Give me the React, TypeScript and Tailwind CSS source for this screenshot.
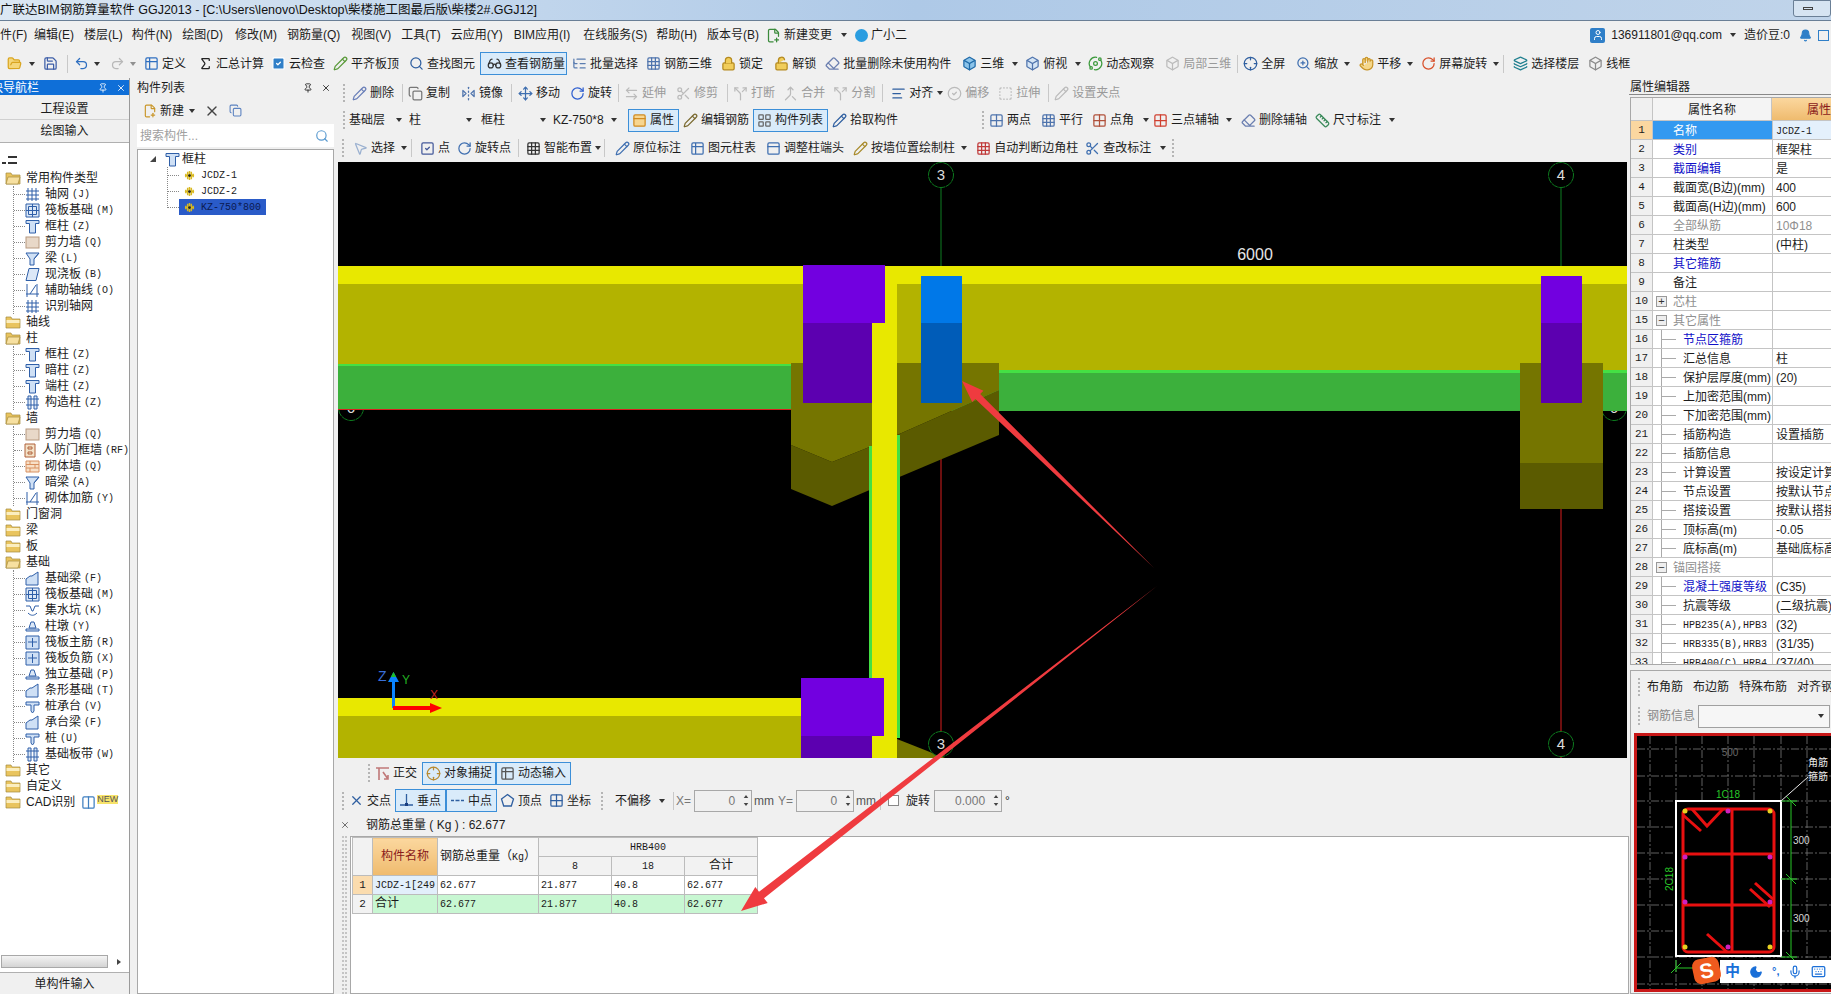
import type { ReactNode } from "react";
import {
  ArrowLeftRight, AlignLeft, Bell, Box, CircleCheck, Columns2, Copy, Crosshair, Eraser, FilePlus2, FlipHorizontal2, FolderOpen, Glasses,
  Grid2x2, Grid3x3, Hand, Keyboard, Layers, LayoutGrid, ListTree, Lock, LockOpen, Merge, Mic, Moon, Move, MousePointer2, Orbit, PanelTop,
  Pencil, Pin, Redo2, RotateCw, Ruler, Save, Scissors, Search, Sigma, Split, SquareCheck, SquareDashed, Table2, Undo2, User, X, ZoomIn,
} from "lucide-react";

const Caret = ({ c = "" }: { c?: string }) => (
  <svg viewBox="0 0 6 4" className={`w-[6px] h-[4px] shrink-0 ${c}`}>
    <path d="M0 0h6L3 4z" fill="#333" />
  </svg>
);
const Dots = ({ c = "" }: { c?: string }) => <div className={`h-[18px] border-l-2 border-dotted border-[#b5b5b5] shrink-0 ${c}`} />;
const Sep = ({ c = "" }: { c?: string }) => <div className={`h-[18px] w-px bg-[#c8c8c8] shrink-0 ${c}`} />;

const Tool = ({ i, t, c = "", gray }: { i: ReactNode; t: string; c?: string; gray?: boolean }) => (
  <div className={`flex items-center shrink-0 ${c}`}>
    <span className="w-[18px] flex items-center">{i}</span>
    <span className={`whitespace-nowrap ${gray ? "text-[#9a9a9a]" : "text-[#1c1c1c]"}`}>{t}</span>
  </div>
);

const Active = ({ children, c = "" }: { children: ReactNode; c?: string }) => (
  <div className={`flex items-center shrink-0 h-[23px] border border-[#3c8fd8] bg-[#d9ebfa] ${c}`}>{children}</div>
);

const I = "w-[15px] h-[15px]";

const Menu = () => (
  <div className="h-[27px] pt-[1px] flex items-center text-[12px] text-[#1c1c1c] shrink-0 overflow-hidden">
    <span className="w-[27px] overflow-hidden whitespace-nowrap">
      <span className="ml-[-12px] inline-block">文件(F)</span>
    </span>
    <span className="ml-[7px]">编辑(E)</span>
    <span className="ml-[10px]">楼层(L)</span>
    <span className="ml-[9px]">构件(N)</span>
    <span className="ml-[10px]">绘图(D)</span>
    <span className="ml-[12px]">修改(M)</span>
    <span className="ml-[10px]">钢筋量(Q)</span>
    <span className="ml-[11px]">视图(V)</span>
    <span className="ml-[10px]">工具(T)</span>
    <span className="ml-[10px]">云应用(Y)</span>
    <span className="ml-[11px]">BIM应用(I)</span>
    <span className="ml-[13px]">在线服务(S)</span>
    <span className="ml-[9px]">帮助(H)</span>
    <span className="ml-[10px]">版本号(B)</span>
    <FilePlus2 className="w-[15px] h-[15px] ml-[7px] text-[#3b8a3b]" />
    <span className="ml-[3px]">新建变更</span>
    <Caret c="ml-[9px]" />
    <span className="ml-[8px] w-[13px] h-[13px] rounded-full bg-[#2a9de0]" />
    <span className="ml-[3px]">广小二</span>
    <div className="ml-auto flex items-center">
      <span className="w-[15px] h-[15px] rounded-[2px] bg-[#2f7fc8] flex items-center justify-center">
        <User className="w-[12px] h-[12px] text-white" />
      </span>
      <span className="ml-[6px]">136911801@qq.com</span>
      <Caret c="ml-[8px]" />
      <span className="ml-[8px]">造价豆:0</span>
      <Bell className="w-[13px] h-[13px] ml-[9px] text-[#2f7fc8] fill-[#2f7fc8]" />
      <span className="ml-[6px] w-[11px] h-[11px] border border-[#2f7fc8]" />
      <span className="w-[2px]" />
    </div>
  </div>
);

const MainBar = () => (
  <div className="h-[30px] pt-[1px] flex items-center text-[12px] shrink-0 pl-[7px] overflow-hidden">
    <FolderOpen className={`${I} text-[#d9a520] fill-[#f5d77a]`} />
    <Caret c="ml-[7px]" />
    <Save className={`${I} ml-[8px] text-[#3d5ea8]`} />
    <Sep c="ml-[9px]" />
    <Undo2 className={`${I} ml-[6px] text-[#2f6fc0]`} />
    <Caret c="ml-[5px]" />
    <Redo2 className={`${I} ml-[10px] text-[#b8b8b8]`} />
    <Caret c="ml-[5px] opacity-50" />
    <Tool c="ml-[8px]" i={<Table2 className={`${I} text-[#2f6fc0]`} />} t="定义" />
    <Tool c="ml-[12px]" i={<Sigma className={`${I} text-[#222]`} />} t="汇总计算" />
    <Tool c="ml-[7px]" i={<SquareCheck className={`${I} text-white fill-[#2f7fc8]`} />} t="云检查" />
    <Tool c="ml-[8px]" i={<Pencil className={`${I} text-[#5a9a3a]`} />} t="平齐板顶" />
    <Tool c="ml-[10px]" i={<Search className={`${I} text-[#2f5fa0]`} />} t="查找图元" />
    <Active c="ml-[5px] w-[87px] pl-[6px]">
      <Tool i={<Glasses className={`${I} text-[#333]`} />} t="查看钢筋量" />
    </Active>
    <Tool c="ml-[5px]" i={<ListTree className={`${I} text-[#5b7db0]`} />} t="批量选择" />
    <Tool c="ml-[8px]" i={<Grid3x3 className={`${I} text-[#4f74ad]`} />} t="钢筋三维" />
    <Tool c="ml-[9px]" i={<Lock className={`${I} text-[#b58a1e] fill-[#f1cd5a]`} />} t="锁定" />
    <Tool c="ml-[11px]" i={<LockOpen className={`${I} text-[#b58a1e] fill-[#f1cd5a]`} />} t="解锁" />
    <Tool c="ml-[9px]" i={<Eraser className={`${I} text-[#6b7fb0]`} />} t="批量删除未使用构件" />
    <Tool c="ml-[11px]" i={<Box className={`${I} text-[#1f6aa8] fill-[#8cc4ea]`} />} t="三维" />
    <Caret c="ml-[8px]" />
    <Tool c="ml-[7px]" i={<Box className={`${I} text-[#4f74ad] fill-[#d5e5f5]`} />} t="俯视" />
    <Caret c="ml-[8px]" />
    <Tool c="ml-[7px]" i={<Orbit className={`${I} text-[#3c9a3c]`} />} t="动态观察" />
    <Tool c="ml-[11px]" gray i={<Box className={`${I} text-[#bbb]`} />} t="局部三维" />
    <Sep c="ml-[6px]" />
    <Tool c="ml-[5px]" i={<Crosshair className={`${I} text-[#2f5fa0]`} />} t="全屏" />
    <Tool c="ml-[11px]" i={<ZoomIn className={`${I} text-[#3f6fb0]`} />} t="缩放" />
    <Caret c="ml-[6px]" />
    <Tool c="ml-[9px]" i={<Hand className={`${I} text-[#c9962a] fill-[#f5d78a]`} />} t="平移" />
    <Caret c="ml-[6px]" />
    <Tool c="ml-[8px]" i={<RotateCw className={`${I} text-[#d8502a]`} />} t="屏幕旋转" />
    <Caret c="ml-[6px]" />
    <Sep c="ml-[4px]" />
    <Tool c="ml-[9px]" i={<Layers className={`${I} text-[#1f7f8f]`} />} t="选择楼层" />
    <Tool c="ml-[9px]" i={<Box className={`${I} text-[#8a8a8a]`} />} t="线框" />
  </div>
);

const Bar2 = () => (
  <div className="h-[26px] flex items-center text-[12px] pl-[8px] overflow-hidden">
    <Dots />
    <Tool c="ml-[7px]" i={<Pencil className={`${I} text-[#6a7fb8]`} />} t="删除" />
    <Sep c="ml-[8px]" />
    <Tool c="ml-[5px]" i={<Copy className={`${I} text-[#777]`} />} t="复制" />
    <Tool c="ml-[11px]" i={<FlipHorizontal2 className={`${I} text-[#4f74ad]`} />} t="镜像" />
    <Sep c="ml-[8px]" />
    <Tool c="ml-[6px]" i={<Move className={`${I} text-[#3f6fb0]`} />} t="移动" />
    <Tool c="ml-[10px]" i={<RotateCw className={`${I} text-[#2f5fd0]`} />} t="旋转" />
    <Sep c="ml-[6px]" />
    <Tool c="ml-[5px]" gray i={<ArrowLeftRight className={`${I} text-[#bbb]`} />} t="延伸" />
    <Tool c="ml-[10px]" gray i={<Scissors className={`${I} text-[#bbb]`} />} t="修剪" />
    <Sep c="ml-[9px]" />
    <Tool c="ml-[5px]" gray i={<Split className={`${I} text-[#bbb]`} />} t="打断" />
    <Tool c="ml-[8px]" gray i={<Merge className={`${I} text-[#bbb]`} />} t="合并" />
    <Tool c="ml-[8px]" gray i={<Split className={`${I} text-[#bbb]`} />} t="分割" />
    <Sep c="ml-[7px]" />
    <Tool c="ml-[8px]" i={<AlignLeft className={`${I} text-[#2f5fa0]`} />} t="对齐" />
    <Caret c="ml-[4px]" />
    <Tool c="ml-[4px]" gray i={<CircleCheck className={`${I} text-[#bbb]`} />} t="偏移" />
    <Tool c="ml-[9px]" gray i={<SquareDashed className={`${I} text-[#bbb]`} />} t="拉伸" />
    <Sep c="ml-[8px]" />
    <Tool c="ml-[5px]" gray i={<Pencil className={`${I} text-[#bbb]`} />} t="设置夹点" />
  </div>
);

const Combo = ({ t, w }: { t: string; w: string }) => (
  <div className={`flex items-center justify-between shrink-0 ${w}`}>
    <span className="whitespace-nowrap overflow-hidden">{t}</span>
    <Caret />
  </div>
);

const Bar3 = () => (
  <div className="h-[28px] flex items-center text-[12px] pl-[8px] text-[#1c1c1c] overflow-hidden">
    <Dots />
    <Combo t="基础层" w="ml-[4px] w-[53px]" />
    <Combo t="柱" w="ml-[7px] w-[63px]" />
    <Combo t="框柱" w="ml-[9px] w-[65px]" />
    <Combo t="KZ-750*8" w="ml-[7px] w-[64px]" />
    <Active c="ml-[11px] w-[51px] pl-[3px]">
      <Tool i={<PanelTop className={`${I} text-[#d08a20] fill-[#f7d690]`} />} t="属性" />
    </Active>
    <Tool c="ml-[4px]" i={<Pencil className={`${I} text-[#7a6a30]`} />} t="编辑钢筋" />
    <Active c="ml-[4px] w-[75px] pl-[3px]">
      <Tool i={<LayoutGrid className={`${I} text-[#666]`} />} t="构件列表" />
    </Active>
    <Tool c="ml-[4px]" i={<Pencil className={`${I} text-[#2f5fa0]`} />} t="拾取构件" />
    <Dots c="ml-[84px]" />
    <Tool c="ml-[5px]" i={<Grid2x2 className={`${I} text-[#4f74ad]`} />} t="两点" />
    <Tool c="ml-[10px]" i={<Grid3x3 className={`${I} text-[#4f74ad]`} />} t="平行" />
    <Tool c="ml-[9px]" i={<Grid2x2 className={`${I} text-[#b0503a]`} />} t="点角" />
    <Caret c="ml-[9px]" />
    <Tool c="ml-[4px]" i={<Grid2x2 className={`${I} text-[#d04030]`} />} t="三点辅轴" />
    <Caret c="ml-[7px]" />
    <Tool c="ml-[9px]" i={<Eraser className={`${I} text-[#6b7fb0]`} />} t="删除辅轴" />
    <Tool c="ml-[8px]" i={<Ruler className={`${I} text-[#3a8a5a]`} />} t="尺寸标注" />
    <Caret c="ml-[8px]" />
  </div>
);

const Bar4 = () => (
  <div className="h-[28px] flex items-center text-[12px] pl-[7px] overflow-hidden">
    <Dots />
    <Tool c="ml-[9px]" i={<MousePointer2 className={`${I} text-[#9ab0d0]`} />} t="选择" />
    <Caret c="ml-[6px]" />
    <Sep c="ml-[4px]" />
    <Tool c="ml-[8px]" i={<SquareCheck className={`${I} text-[#44599a]`} />} t="点" />
    <Tool c="ml-[7px]" i={<RotateCw className={`${I} text-[#3f6fb0]`} />} t="旋转点" />
    <Sep c="ml-[7px]" />
    <Tool c="ml-[7px]" i={<Grid3x3 className={`${I} text-[#333]`} />} t="智能布置" />
    <Caret c="ml-[3px]" />
    <Sep c="ml-[3px]" />
    <Tool c="ml-[10px]" i={<Pencil className={`${I} text-[#3f6fb0]`} />} t="原位标注" />
    <Tool c="ml-[9px]" i={<Table2 className={`${I} text-[#3f6fb0]`} />} t="图元柱表" />
    <Tool c="ml-[10px]" i={<PanelTop className={`${I} text-[#3f6fb0]`} />} t="调整柱端头" />
    <Tool c="ml-[9px]" i={<Pencil className={`${I} text-[#a88a2a]`} />} t="按墙位置绘制柱" />
    <Caret c="ml-[6px]" />
    <Tool c="ml-[9px]" i={<Grid3x3 className={`${I} text-[#c03a3a]`} />} t="自动判断边角柱" />
    <Tool c="ml-[7px]" i={<Scissors className={`${I} text-[#3f6fb0]`} />} t="查改标注" />
    <Caret c="ml-[9px]" />
    <Dots c="ml-[6px]" />
  </div>
);

const Badge = ({ x, y, n }: { x: number; y: number; n: string }) => (
  <g>
    <circle cx={x} cy={y} r="12.5" fill="#000" stroke="#0d7a1e" strokeDasharray="7 0.6" />
    <text x={x} y={y + 5} textAnchor="middle" fontSize="15" fill="#dcdcdc" fontFamily="Liberation Sans">
      {n}
    </text>
  </g>
);

const Canvas = () => (
  <svg viewBox="338 162 1289 596" className="w-[1289px] h-[596px] bg-black block ml-[3px]">
    <line x1="941" y1="186" x2="941" y2="266" stroke="#0f7f22" />
    <line x1="1561" y1="186" x2="1561" y2="266" stroke="#0f7f22" />
    <line x1="941" y1="435" x2="941" y2="732" stroke="#d81e1e" />
    <line x1="1561" y1="509" x2="1561" y2="758" stroke="#d81e1e" />
    <Badge x={351} y={408} n="6" />
    <Badge x={1614} y={408} n="6" />
    <line x1="338" y1="409.5" x2="791" y2="409.5" stroke="#d81e1e" />

    <rect x="338" y="266" width="1289" height="18" fill="#e8e800" />
    <rect x="338" y="284" width="534" height="80" fill="#b3b300" />
    <rect x="897" y="284" width="730" height="86" fill="#b3b300" />
    <rect x="338" y="364" width="534" height="45" fill="#3cb03c" />
    <rect x="338" y="364" width="534" height="2" fill="#44e044" />
    <rect x="897" y="370" width="730" height="41" fill="#3cb03c" />
    <rect x="897" y="370" width="730" height="3" fill="#44e044" />

    <polygon points="791,445 832,462 872,446 872,489 832,506 791,489" fill="#5b5b00" />
    <polygon points="791,363 872,363 872,446 832,462 791,445" fill="#757500" />
    <polygon points="897,435 999,390 999,435 897,478" fill="#5b5b00" />
    <polygon points="897,363 999,363 999,390 897,435" fill="#757500" />

    <rect x="869" y="446" width="3" height="232" fill="#44e044" />
    <rect x="897" y="435" width="3" height="303" fill="#44e044" />
    <rect x="872" y="284" width="25" height="474" fill="#e8e800" />
    <rect x="885" y="266" width="12" height="18" fill="#e8e800" />

    <rect x="803" y="265" width="82" height="58" fill="#7200e0" />
    <rect x="803" y="323" width="69" height="80" fill="#5c00b0" />
    <rect x="921" y="276" width="41" height="47" fill="#0078e8" />
    <rect x="921" y="323" width="41" height="80" fill="#005cb8" />

    <rect x="1520" y="363" width="83" height="100" fill="#757500" />
    <rect x="1520" y="463" width="83" height="46" fill="#5b5b00" />
    <rect x="1541" y="276" width="41" height="47" fill="#7200e0" />
    <rect x="1541" y="323" width="41" height="80" fill="#5c00b0" />

    <rect x="338" y="698" width="463" height="18" fill="#e8e800" />
    <rect x="338" y="716" width="463" height="42" fill="#b3b300" />
    <polygon points="897,739 945,758 897,758" fill="#757500" />
    <rect x="801" y="678" width="83" height="58" fill="#7200e0" />
    <rect x="801" y="736" width="71" height="22" fill="#5c00b0" />

    <Badge x={941} y={175} n="3" />
    <Badge x={1561} y={175} n="4" />
    <Badge x={941} y={744} n="3" />
    <Badge x={1561} y={744} n="4" />
    <text x="1255" y="260" textAnchor="middle" fontSize="16" fill="#e6e6e6" fontFamily="Liberation Sans">
      6000
    </text>

    <rect x="392" y="680" width="3" height="28" fill="#0a84ff" />
    <polygon points="393.5,672 388,682 399,682" fill="#0a84ff" />
    <polygon points="393.5,672 391,677 396,677" fill="#20c020" />
    <rect x="393" y="706" width="40" height="4" fill="#ff0000" />
    <polygon points="442,708 430,703 430,713" fill="#ff0000" />
    <text x="378" y="681" fontSize="14" fill="#3a6fd8" fontFamily="Liberation Sans">Z</text>
    <text x="402" y="684" fontSize="12" fill="#22b022" fontFamily="Liberation Sans">Y</text>
    <text x="430" y="699" fontSize="12" fill="#c02020" fontFamily="Liberation Sans">X</text>
  </svg>
);

const Snap = ({ i, t, w }: { i: ReactNode; t: string; w: string }) => (
  <Active c={`${w} pl-[3px]`}>
    <Tool i={i} t={t} />
  </Active>
);

const Spin = ({ v, w }: { v: string; w: string }) => (
  <div className={`h-[22px] bg-[#f0f0f0] border border-[#a8a8a8] flex items-center justify-end shrink-0 ${w}`}>
    <span className="text-[#777] mr-[6px] font-['Liberation_Sans',sans-serif]">{v}</span>
    <span className="w-[10px] flex flex-col items-center gap-[5px]">
      <svg viewBox="0 0 6 4" className="w-[6px] h-[3px]"><path d="M0 4h6L3 0z" fill="#444" /></svg>
      <svg viewBox="0 0 6 4" className="w-[6px] h-[3px]"><path d="M0 0h6L3 4z" fill="#444" /></svg>
    </span>
  </div>
);

const SnapIcon = ({ d, dot }: { d: string; dot?: boolean }) => (
  <svg viewBox="0 0 15 15" className={I}>
    <path d={d} fill="none" stroke="#2f5fa0" strokeWidth="1.3" />
    {dot && <rect x="6" y="10" width="3" height="3" fill="#1c3f80" />}
  </svg>
);

const Bottom = () => (
  <div className="flex-1 flex flex-col min-h-0 text-[12px] text-[#1c1c1c]">
    <div className="h-[30px] flex items-center pl-[33px]">
      <Dots />
      <Tool
        c="ml-[5px]"
        i={
          <svg viewBox="0 0 15 15" className={I}>
            <path d="M1 2h13M4 2v12M8 6l5 7M13 9v4H9" fill="none" stroke="#c07878" strokeWidth="1.6" />
          </svg>
        }
        t="正交"
      />
      <Snap w="ml-[5px] w-[74px]" i={<Crosshair className={`${I} text-[#b88a30]`} />} t="对象捕捉" />
      <Snap w="w-[75px]" i={<Table2 className={`${I} text-[#555]`} />} t="动态输入" />
    </div>
    <div className="h-[25px] flex items-center pl-[7px]">
      <Dots />
      <Tool c="ml-[5px]" i={<X className={`${I} text-[#2f5fa0]`} />} t="交点" />
      <Snap w="ml-[4px] w-[51px]" i={<SnapIcon d="M7.5 1v11M1 12h13" dot />} t="垂点" />
      <Snap w="w-[51px]" i={<SnapIcon d="M1 7.5h3M11 7.5h3M5.5 7.5h4" />} t="中点" />
      <Tool c="ml-[3px]" i={<SnapIcon d="M7.5 1.5l6 4.5-2.2 7H3.7L1.5 6z" />} t="顶点" />
      <Tool c="ml-[7px]" i={<Grid2x2 className={`${I} text-[#2f5fa0]`} />} t="坐标" />
      <Dots c="ml-[10px]" />
      <span className="ml-[12px]">不偏移</span>
      <Caret c="ml-[8px]" />
      <Sep c="ml-[8px]" />
      <span className="ml-[2px] text-[#777]">X=</span>
      <Spin v="0" w="ml-[3px] w-[58px]" />
      <span className="ml-[2px] text-[#555]">mm</span>
      <span className="ml-[4px] text-[#777]">Y=</span>
      <Spin v="0" w="ml-[3px] w-[58px]" />
      <span className="ml-[2px] text-[#555]">mm</span>
      <Sep c="ml-[4px]" />
      <span className="ml-[7px] w-[11px] h-[11px] bg-white border border-[#888]" />
      <span className="ml-[7px]">旋转</span>
      <Spin v="0.000" w="ml-[4px] w-[68px]" />
      <span className="ml-[3px]">°</span>
    </div>
    <div className="h-[23px] flex items-center pl-[5px]">
      <X className="w-[10px] h-[10px] text-[#555]" />
      <span className="ml-[16px]">钢筋总重量 ( Kg ) : 62.677</span>
    </div>
    <div className="flex-1 min-h-0 flex">
      <div className="w-[15px] shrink-0 pl-[7px]">
        <div className="h-full w-[5px] border-x-2 border-dotted border-[#c4c4c4]" />
      </div>
      <div className="flex-1 bg-white border border-[#a8a8a8] pl-[1px]">
        <table className="border-collapse table-fixed w-[405px] font-['Liberation_Mono','Noto_Sans_CJK_SC',monospace] text-[10px] text-[#1a1a1a]">
          <colgroup>
            <col className="w-[20px]" />
            <col className="w-[65px]" />
            <col className="w-[101px]" />
            <col className="w-[73px]" />
            <col className="w-[73px]" />
            <col className="w-[73px]" />
          </colgroup>
          <thead>
            <tr className="h-[19px]">
              <th rowSpan={2} className="border border-[#bcbcbc] bg-[#f2f2f2]" />
              <th rowSpan={2} className="border border-[#bcbcbc] bg-gradient-to-b from-[#fbd79e] to-[#efbb6e] font-normal text-[12px] text-[#8a1a1a]">构件名称</th>
              <th rowSpan={2} className="border border-[#bcbcbc] bg-[#f6f6f6] font-normal text-[12px] text-left pl-[2px] whitespace-nowrap">钢筋总重量（<span className="text-[10px]">Kg</span>）</th>
              <th colSpan={3} className="border border-[#bcbcbc] bg-[#f2f2f2] font-normal">HRB400</th>
            </tr>
            <tr className="h-[19px]">
              <th className="border border-[#bcbcbc] bg-[#f2f2f2] font-normal">8</th>
              <th className="border border-[#bcbcbc] bg-[#f2f2f2] font-normal">18</th>
              <th className="border border-[#bcbcbc] bg-[#f2f2f2] font-normal text-[12px]">合计</th>
            </tr>
          </thead>
          <tbody>
            <tr className="h-[19px]">
              <td className="border border-[#bcbcbc] bg-[#fbdcae] text-center text-[11px]">1</td>
              <td className="border border-[#bcbcbc] bg-[#e2effb] pl-[2px] whitespace-nowrap overflow-hidden">JCDZ-1[249</td>
              <td className="border border-[#bcbcbc] pl-[2px]">62.677</td>
              <td className="border border-[#bcbcbc] pl-[2px]">21.877</td>
              <td className="border border-[#bcbcbc] pl-[2px]">40.8</td>
              <td className="border border-[#bcbcbc] pl-[2px]">62.677</td>
            </tr>
            <tr className="h-[19px] bg-[#c8f7d2]">
              <td className="border border-[#bcbcbc] bg-[#f2f2f2] text-center text-[11px]">2</td>
              <td className="border border-[#bcbcbc] pl-[2px] text-[12px]">合计</td>
              <td className="border border-[#bcbcbc] pl-[2px]">62.677</td>
              <td className="border border-[#bcbcbc] pl-[2px]">21.877</td>
              <td className="border border-[#bcbcbc] pl-[2px]">40.8</td>
              <td className="border border-[#bcbcbc] pl-[2px]">62.677</td>
            </tr>
          </tbody>
        </table>
      </div>
    </div>
  </div>
);

const Folder = ({ open }: { open?: boolean }) => (
  <svg viewBox="0 0 16 14" className="w-[16px] h-[14px] shrink-0">
    <path d="M1 2h5l1 2h8v9H1z" fill="#e9c45e" stroke="#a58a3c" strokeWidth="0.7" />
    {open ? <path d="M3 6h12l-2 7H1z" fill="#f7e0a0" stroke="#a58a3c" strokeWidth="0.7" /> : <path d="M1.5 5h13v3h-13z" fill="#fbeec0" />}
  </svg>
);

type Kind = "grid" | "raft" | "col" | "wall" | "beam" | "slab" | "aux" | "door" | "brick" | "found" | "pit" | "pier" | "bar" | "pile" | "gear";

const NodeIcon = ({ k }: { k: Kind }) => {
  const s = "#2f5fa8";
  return (
    <svg viewBox="0 0 15 15" className="w-[15px] h-[15px] shrink-0">
      {k === "grid" && <path d="M3 1v13M7 1v13M11 1v13M1 4h13M1 8h13M1 12h13" stroke={s} fill="none" />}
      {k === "raft" && <path d="M1 1h13v13H1zM3.5 3.5h8v8h-8zM7.5 1v13M1 7.5h13" stroke={s} fill="#dce8f7" />}
      {k === "col" && <path d="M1 1.5h13v3h-3.5v9.5h-6V4.5H1z" stroke={s} fill="#cfe0f5" />}
      {k === "wall" && <rect x="1" y="2" width="13" height="11" fill="#e8d8c8" stroke="#b89a80" />}
      {k === "beam" && <path d="M1 2h13l-5 6v6H5V8zM9 8l5-6" stroke={s} fill="#cfe0f5" />}
      {k === "slab" && <path d="M4 1.5h10L11 13.5H1z" stroke={s} fill="#dce8f7" />}
      {k === "aux" && <path d="M2 1v13M12 1v13M1 11h13M5 11l6-9" stroke={s} fill="none" />}
      {k === "door" && <path d="M3 1h10v13H3zM6 4h4v2H6zM6 9h4v2H6z" stroke="#b0603a" fill="#f3e2c8" />}
      {k === "brick" && <path d="M1 2h13v11H1zM1 5.5h13M1 9h13M5 2v3.5M10 5.5V9M5 9v4" stroke="#d89060" fill="#f7e0c8" />}
      {k === "found" && <path d="M1 14V8l4-3 2 0 6-4v13z" stroke={s} fill="#cfe0f5" />}
      {k === "pit" && <path d="M1 3h4l2 5h1l2-5h4M3 10c3 3 6 3 9 0" stroke={s} fill="none" />}
      {k === "pier" && <path d="M6 3h3l2 6H4zM1 10h13v2H1z" stroke={s} fill="#dce8f7" />}
      {k === "bar" && <path d="M1 1h13v13H1zM7.5 3v9M3 7h9" stroke={s} fill="#cfe0f5" />}
      {k === "pile" && <path d="M1 3h13v3H9v6l-1.5 2L6 12V6H1z" stroke={s} fill="#cfe0f5" />}
      {k === "gear" && <path d="M3 1h3v13H3zM9 1h3v13H9zM1 4h13M1 10h13" stroke={s} fill="#dce8f7" />}
    </svg>
  );
};

const Child = ({ k, t, tag, c = "" }: { k: Kind; t: string; tag: string; c?: string }) => (
  <div className={`h-[16px] flex items-center ${c}`}>
    <span className="w-[11px] border-t border-dotted border-[#888]" />
    <NodeIcon k={k} />
    <span className="ml-[5px] whitespace-nowrap">{t}</span>
    <span className="ml-[3px] text-[10px] font-['Liberation_Mono',monospace] whitespace-nowrap">{tag}</span>
  </div>
);

const Group = ({ t, open, children }: { t: ReactNode; open?: boolean; children?: ReactNode }) => (
  <div>
    <div className="h-[16px] flex items-center pl-[5px]">
      <Folder open={open} />
      <span className="ml-[5px] whitespace-nowrap flex items-center">{t}</span>
    </div>
    {children && <div className="ml-[13px] border-l border-dotted border-[#888] mb-[8px] [&>*:last-child]:mb-[-8px]">{children}</div>}
  </div>
);

const PaneHead = ({ t, c = "" }: { t: ReactNode; c?: string }) => (
  <div className={`h-[15px] mt-[2px] flex items-center justify-between text-[12px] overflow-hidden ${c}`}>
    <span className="whitespace-nowrap">{t}</span>
    <span className="flex items-center gap-[8px] pr-[3px]">
      <Pin className="w-[10px] h-[10px]" />
      <X className="w-[10px] h-[10px]" />
    </span>
  </div>
);

const NavPanel = () => (
  <div className="w-[130px] shrink-0 flex flex-col text-[12px] text-[#1c1c1c] border-r border-[#9a9a9a]">
    <PaneHead c="bg-[#0f6fd8] text-white" t={<span className="ml-[-9px] block">块导航栏</span>} />
    <div className="h-[21px] mt-[4px] flex items-center justify-center border-b border-[#d0d0d0]">工程设置</div>
    <div className="h-[23px] flex items-center justify-center border-b border-[#b0b0b0]">绘图输入</div>
    <div className="flex-1 bg-white flex flex-col min-h-0">
      <div className="h-[27px] flex items-end pb-[6px] gap-[2px] pl-[2px]">
        <span className="w-[4px] h-[2px] bg-[#333]" />
        <span className="w-[9px] h-[8px] border-t-2 border-b-2 border-[#333]" />
      </div>
      <Group t="常用构件类型" open>
        <Child k="grid" t="轴网" tag="(J)" />
        <Child k="raft" t="筏板基础" tag="(M)" />
        <Child k="col" t="框柱" tag="(Z)" />
        <Child k="wall" t="剪力墙" tag="(Q)" />
        <Child k="beam" t="梁" tag="(L)" />
        <Child k="slab" t="现浇板" tag="(B)" />
        <Child k="aux" t="辅助轴线" tag="(O)" />
        <Child k="grid" t="识别轴网" tag="" />
      </Group>
      <Group t="轴线" />
      <Group t="柱" open>
        <Child k="col" t="框柱" tag="(Z)" />
        <Child k="col" t="暗柱" tag="(Z)" />
        <Child k="col" t="端柱" tag="(Z)" />
        <Child k="gear" t="构造柱" tag="(Z)" />
      </Group>
      <Group t="墙" open>
        <Child k="wall" t="剪力墙" tag="(Q)" />
        <Child k="door" t="人防门框墙" tag="(RF)" />
        <Child k="brick" t="砌体墙" tag="(Q)" />
        <Child k="beam" t="暗梁" tag="(A)" />
        <Child k="aux" t="砌体加筋" tag="(Y)" />
      </Group>
      <Group t="门窗洞" />
      <Group t="梁" />
      <Group t="板" />
      <Group t="基础" open>
        <Child k="found" t="基础梁" tag="(F)" />
        <Child k="raft" t="筏板基础" tag="(M)" />
        <Child k="pit" t="集水坑" tag="(K)" />
        <Child k="pier" t="柱墩" tag="(Y)" />
        <Child k="bar" t="筏板主筋" tag="(R)" />
        <Child k="bar" t="筏板负筋" tag="(X)" />
        <Child k="pier" t="独立基础" tag="(P)" />
        <Child k="found" t="条形基础" tag="(T)" />
        <Child k="pile" t="桩承台" tag="(V)" />
        <Child k="found" t="承台梁" tag="(F)" />
        <Child k="pile" t="桩" tag="(U)" />
        <Child k="gear" t="基础板带" tag="(W)" />
      </Group>
      <Group t="其它" />
      <Group t="自定义" />
      <Group
        t={
          <>
            CAD识别
            <Columns2 className="w-[15px] h-[15px] ml-[6px] text-[#3f7fc0]" />
            <span className="ml-[1px] mb-[5px] text-[9px] leading-[9px] bg-[#f7e36a] text-[#555] font-['Liberation_Sans',sans-serif]">NEW</span>
          </>
        }
      />
      <div className="flex-1" />
      <div className="h-[13px] mb-[4px] flex items-center pl-[1px]">
        <div className="w-[107px] h-[13px] border border-[#a8a8a8] bg-gradient-to-b from-[#f4f4f4] to-[#d4d4d4]" />
        <svg viewBox="0 0 4 6" className="w-[4px] h-[6px] ml-[9px]"><path d="M0 0l4 3-4 3z" fill="#444" /></svg>
      </div>
    </div>
    <div className="h-[22px] flex items-center justify-center border-t border-[#b0b0b0]">单构件输入</div>
  </div>
);

const ListPanel = () => (
  <div className="w-[197px] shrink-0 ml-[7px] flex flex-col text-[12px] text-[#1c1c1c]">
    <PaneHead t="构件列表" />
    <div className="h-[27px] mt-[2px] flex items-center pl-[6px]">
      <FilePlus2 className="w-[14px] h-[14px] text-[#c9962a]" />
      <span className="ml-[3px]">新建</span>
      <Caret c="ml-[5px]" />
      <X className="w-[16px] h-[16px] ml-[9px] text-[#444]" />
      <Copy className="w-[13px] h-[13px] ml-[9px] text-[#5b82c0]" />
    </div>
    <div className="h-[23px] flex items-center bg-white">
      <span className="pl-[3px] text-[#a0a0a0] flex-1">搜索构件...</span>
      <Search className="w-[14px] h-[14px] text-[#5b9bd0] mr-[5px]" />
    </div>
    <div className="flex-1 mt-[2px] bg-white border border-[#a8a8a8] pt-[1px]">
      <div className="h-[16px] flex items-center pl-[12px]">
        <svg viewBox="0 0 6 6" className="w-[6px] h-[6px]"><path d="M6 0v6H0z" fill="#444" /></svg>
        <span className="ml-[9px]"><NodeIcon k="col" /></span>
        <span className="ml-[2px]">框柱</span>
      </div>
      <div className="ml-[29px] border-l border-dotted border-[#888] h-[41px]">
        {["JCDZ-1", "JCDZ-2", "KZ-750*800"].map((t, n) => (
          <div key={t} className="h-[16px] flex items-center">
            <span className="w-[11px] border-t border-dotted border-[#888]" />
            <span className={`flex items-center h-[16px] pl-[5px] w-[87px] ${n === 2 ? "bg-[#2a5bc8] text-[#0a1a50]" : ""}`}>
              <svg viewBox="0 0 12 12" className="w-[11px] h-[11px] shrink-0">
                <path d="M2 4v4M4 2v8M6 1v10M8 2v8M10 4v4M1 6h10" stroke="#d8b820" strokeWidth="1.6" />
                <circle cx="6" cy="6" r="1.5" fill="#222" />
              </svg>
              <span className="ml-[6px] text-[10px] font-['Liberation_Mono',monospace]">{t}</span>
            </span>
          </div>
        ))}
      </div>
    </div>
  </div>
);

type Prop = { n: string; name: string; v?: string; tone?: "blue" | "gray" | "sel"; tree?: "plus" | "minus" | "leaf"; small?: boolean };

const props: Prop[] = [
  { n: "1", name: "名称", v: "JCDZ-1", tone: "sel" },
  { n: "2", name: "类别", v: "框架柱", tone: "blue" },
  { n: "3", name: "截面编辑", v: "是", tone: "blue" },
  { n: "4", name: "截面宽(B边)(mm)", v: "400" },
  { n: "5", name: "截面高(H边)(mm)", v: "600" },
  { n: "6", name: "全部纵筋", v: "10Φ18", tone: "gray" },
  { n: "7", name: "柱类型", v: "(中柱)" },
  { n: "8", name: "其它箍筋", tone: "blue" },
  { n: "9", name: "备注" },
  { n: "10", name: "芯柱", tone: "gray", tree: "plus" },
  { n: "15", name: "其它属性", tone: "gray", tree: "minus" },
  { n: "16", name: "节点区箍筋", tone: "blue", tree: "leaf" },
  { n: "17", name: "汇总信息", v: "柱", tree: "leaf" },
  { n: "18", name: "保护层厚度(mm)", v: "(20)", tree: "leaf" },
  { n: "19", name: "上加密范围(mm)", tree: "leaf" },
  { n: "20", name: "下加密范围(mm)", tree: "leaf" },
  { n: "21", name: "插筋构造", v: "设置插筋", tree: "leaf" },
  { n: "22", name: "插筋信息", tree: "leaf" },
  { n: "23", name: "计算设置", v: "按设定计算", tree: "leaf" },
  { n: "24", name: "节点设置", v: "按默认节点", tree: "leaf" },
  { n: "25", name: "搭接设置", v: "按默认搭接", tree: "leaf" },
  { n: "26", name: "顶标高(m)", v: "-0.05", tree: "leaf" },
  { n: "27", name: "底标高(m)", v: "基础底标高", tree: "leaf" },
  { n: "28", name: "锚固搭接", tone: "gray", tree: "minus" },
  { n: "29", name: "混凝土强度等级", v: "(C35)", tone: "blue", tree: "leaf" },
  { n: "30", name: "抗震等级", v: "(二级抗震)", tree: "leaf" },
  { n: "31", name: "HPB235(A),HPB3", v: "(32)", tree: "leaf", small: true },
  { n: "32", name: "HRB335(B),HRB3", v: "(31/35)", tree: "leaf", small: true },
  { n: "33", name: "HRB400(C),HRB4", v: "(37/40)", tree: "leaf", small: true },
];

const PropRow = ({ p }: { p: Prop }) => {
  const sel = p.tone === "sel";
  const color = p.tone === "blue" ? "text-[#1010c8]" : p.tone === "gray" ? "text-[#909090]" : sel ? "text-white" : "text-[#1c1c1c]";
  return (
    <div className="h-[19px] shrink-0 flex border-b border-[#c4c4c4]">
      <div className={`w-[22px] shrink-0 flex items-center justify-center text-[11px] border-r border-[#c4c4c4] font-['Liberation_Mono',monospace] ${sel ? "bg-[#fbd7a0]" : "bg-[#f0f0f0]"}`}>{p.n}</div>
      <div className={`w-[120px] shrink-0 flex items-center border-r border-[#c4c4c4] whitespace-nowrap overflow-hidden ${sel ? "bg-[#3399f0]" : ""} ${color}`}>
        {p.tree === "plus" || p.tree === "minus" ? (
          <span className="ml-[3px] w-[11px] h-[11px] border border-[#999] bg-[#eee] flex items-center justify-center text-[#333] text-[11px] leading-none mr-[6px]">{p.tree === "plus" ? "+" : "−"}</span>
        ) : p.tree === "leaf" ? (
          <span className="ml-[8px] w-[22px] h-full border-l border-[#aaa] flex items-center">
            <span className="w-[14px] border-t border-[#aaa]" />
          </span>
        ) : (
          <span className="w-[20px]" />
        )}
        <span className={`pt-[2px] ${p.small ? "text-[10px] font-['Liberation_Mono',monospace]" : ""}`}>{p.name}</span>
      </div>
      <div className={`flex-1 flex items-center pl-[3px] pt-[2px] whitespace-nowrap overflow-hidden ${sel ? "bg-[#e4f0fc] text-[10px] font-['Liberation_Mono',monospace]" : p.tone === "gray" ? "text-[#909090]" : "text-[#1c1c1c]"}`}>{p.v}</div>
    </div>
  );
};

const Cad = () => (
  <svg viewBox="1637 734 194 253" className="w-[194px] h-[253px] block bg-black" fontFamily="Liberation Sans">
    <g stroke="#7a7a7a" strokeDasharray="8 2 2 2" strokeWidth="0.8">
      {[747, 774, 799, 825, 851, 877, 903, 929, 955, 982].map((y) => (
        <line key={y} x1="1637" x2="1831" y1={y} y2={y} />
      ))}
      {[1650, 1676, 1702, 1728, 1754, 1781, 1807].map((x) => (
        <line key={x} y1="734" y2="987" x1={x} x2={x} />
      ))}
    </g>
    <rect x="1676" y="799" width="105" height="155" fill="#000" stroke="#fff" strokeWidth="2" />
    <g stroke="#e81010" strokeWidth="3" fill="none">
      <rect x="1683" y="807" width="91" height="143" rx="5" />
      <path d="M1732 807v143M1683 852h91M1683 903h91" />
      <path d="M1683 813l18 16M1692 807l15 17 16-17M1750 887l20 18M1755 881l19 17M1707 932l20 18" />
    </g>
    {[[1685, 809], [1770, 809], [1685, 945], [1770, 945]].map(([x, y]) => (
      <circle key={`${x}-${y}`} cx={x} cy={y} r="2.5" fill="#e8d020" />
    ))}
    {[[1728, 809], [1685, 855], [1770, 855], [1685, 900], [1770, 900], [1728, 945]].map(([x, y]) => (
      <circle key={`${x}-${y}`} cx={x} cy={y} r="2.5" fill="#d020c0" />
    ))}
    <g stroke="#28c828" fill="none">
      <path d="M1791 799v156M1781 799h16M1781 877h16M1781 955h16M1786 794l10 10M1786 872l10 10M1786 950l10 10" />
      <path d="M1676 966h24M1671 971l10-10M1676 958v12" />
    </g>
    <line x1="1781" y1="799" x2="1808" y2="775" stroke="#e8e8e8" />
    <text x="1793" y="842" fontSize="10" fill="#d8d8d8">300</text>
    <text x="1793" y="920" fontSize="10" fill="#d8d8d8">300</text>
    <text x="1728" y="796" fontSize="10" fill="#28c828" textAnchor="middle">1C18</text>
    <text x="1673" y="877" fontSize="10" fill="#28c828" textAnchor="middle" transform="rotate(-90 1673 877)">2C18</text>
    <text x="1730" y="754" fontSize="10" fill="#666" textAnchor="middle">500</text>
    <text x="1808" y="764" fontSize="10" fill="#e8e8e8" fontFamily="Noto Sans CJK SC">角筋</text>
    <text x="1808" y="778" fontSize="10" fill="#e8e8e8" fontFamily="Noto Sans CJK SC">箍筋</text>
  </svg>
);

const PropPanel = () => (
  <div className="w-[203px] shrink-0 flex flex-col text-[12px] text-[#1c1c1c] min-h-0">
    <div className="h-[15px] mt-[2px] pl-[1px] border-b border-[#888] leading-[15px]">属性编辑器</div>
    <div className="h-[569px] mt-[2px] ml-[1px] bg-white border border-[#a8a8a8] flex flex-col overflow-hidden">
      <div className="h-[23px] shrink-0 flex border-b border-[#c4c4c4]">
        <div className="w-[22px] bg-[#f0f0f0] border-r border-[#c4c4c4]" />
        <div className="w-[120px] bg-[#f4f4f4] border-r border-[#c4c4c4] flex items-center justify-center pt-[1px]">属性名称</div>
        <div className="flex-1 bg-gradient-to-b from-[#fbd79e] to-[#efbb6e] text-[#8a1a1a] pl-[35px] pt-[1px] flex items-center whitespace-nowrap">属性</div>
      </div>
      {props.map((p) => (
        <PropRow key={p.n} p={p} />
      ))}
    </div>
    <div className="h-[325px] mt-[5px] ml-[1px] border border-[#a8a8a8] border-r-0 flex flex-col">
      <div className="h-[33px] flex items-center pl-[7px] whitespace-nowrap overflow-hidden">
        <Dots />
        <span className="ml-[7px]">布角筋</span>
        <span className="ml-[10px]">布边筋</span>
        <span className="ml-[10px]">特殊布筋</span>
        <span className="ml-[10px]">对齐钢筋</span>
      </div>
      <div className="h-[25px] flex items-center pl-[7px]">
        <Dots />
        <span className="ml-[7px] text-[#888]">钢筋信息</span>
        <div className="ml-[3px] w-[132px] h-[23px] border border-[#a0a0a0] bg-[#f6f6f6] flex items-center justify-end pr-[5px]">
          <Caret />
        </div>
      </div>
      <div className="mt-[4px] ml-[3px] w-[194px] h-[253px] overflow-hidden border-[3px] border-r-0 border-[#c81818] box-content">
        <Cad />
      </div>
    </div>
  </div>
);

const Overlay = () => (
  <>
    <svg viewBox="0 0 1831 994" className="absolute left-0 top-0 w-[1831px] h-[994px] pointer-events-none">
      <polygon points="962,381 983.4,390.7 980.2,393.9 1154,568 975.4,398.9 972.2,402.1" fill="#ef3b3f" />
      <polygon points="741,911 767.7,902.9 764,898.2 1157,586 759,891.8 755.3,887.1" fill="#ef3b3f" />
    </svg>
    <div className="absolute left-[1720px] top-[960px] w-[111px] h-[23px] bg-white flex items-center pl-[5px] gap-[9px] text-[#1a6fd8] font-bold text-[15px]">
      <span>中</span>
      <Moon className="w-[14px] h-[14px] fill-[#1a6fd8]" />
      <span className="text-[11px]">°,</span>
      <Mic className="w-[14px] h-[14px]" />
      <Keyboard className="w-[15px] h-[15px]" />
    </div>
    <div className="absolute left-[1693px] top-[958px] w-[27px] h-[25px] rounded-[7px] bg-[#ef5a1e] rotate-[-12deg] flex items-center justify-center text-white font-bold text-[21px] leading-none font-['Liberation_Sans',sans-serif]">S</div>
  </>
);

export default function App() {
  return (
    <div className="relative w-[1831px] h-[994px] overflow-hidden bg-[#f0f0f0] flex flex-col font-['Liberation_Sans','Noto_Sans_CJK_SC',sans-serif]">
      <div className="h-[21px] shrink-0 bg-gradient-to-r from-[#dbe7f3] via-[#aec9e7] to-[#c0d4ea] border-b border-[#6a7f96] flex items-center justify-between">
        <span className="text-[12.5px] text-[#111] whitespace-nowrap">广联达BIM钢筋算量软件 GGJ2013 - [C:\Users\lenovo\Desktop\柴楼施工图最后版\柴楼2#.GGJ12]</span>
        <span className="w-[38px] h-[17px] self-start border border-[#6a7f96] rounded-b-[3px] bg-[#d6e4f2] flex items-center pl-[9px]">
          <span className="w-[10px] h-[3px] border border-[#444]" />
        </span>
      </div>
      <Menu />
      <MainBar />
      <div className="flex-1 min-h-0 flex">
        <NavPanel />
        <ListPanel />
        <div className="w-[1294px] shrink-0 flex flex-col min-h-0 ml-[1px]">
          <div className="mt-[2px]">
            <Bar2 />
          </div>
          <Bar3 />
          <Bar4 />
          <Canvas />
          <Bottom />
        </div>
        <PropPanel />
      </div>
      <Overlay />
    </div>
  );
}
